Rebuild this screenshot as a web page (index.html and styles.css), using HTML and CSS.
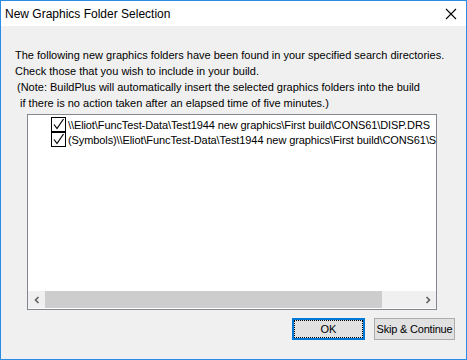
FILE: index.html
```html
<!DOCTYPE html>
<html lang="en">
<head>
  <meta charset="UTF-8">
  <title>New Graphics Folder Selection</title>
  <link rel="stylesheet" href="styles.css">
</head>
<body>
  <div class="window">
    <div class="titlebar">
      <span class="title">New Graphics Folder Selection</span>
      <svg class="close" width="12" height="12" viewBox="0 0 12 12">
        <path d="M1 1 L11 11 M11 1 L1 11" stroke="#000" stroke-width="1.1" fill="none"/>
      </svg>
    </div>

    <div class="content">
      <p class="message">The following new graphics folders have been found in your specified search directories.<br>Check those that you wish to include in your build.</p>
      <p class="note">(Note: BuildPlus will automatically insert the selected graphics folders into the build<br>&nbsp;if there is no action taken after an elapsed time of five minutes.)</p>

      <div class="listbox">
        <div class="rows">
          <div class="row">
            <span class="check"><svg width="13" height="13" viewBox="0 0 13 13"><path d="M2 6.5 L5 10.5 L11.5 1" stroke="#000" stroke-width="1.2" fill="none"/></svg></span>
            <span class="path">\\Eliot\FuncTest-Data\Test1944 new graphics\First build\CONS61\DISP.DRS</span>
          </div>
          <div class="row">
            <span class="check"><svg width="13" height="13" viewBox="0 0 13 13"><path d="M2 6.5 L5 10.5 L11.5 1" stroke="#000" stroke-width="1.2" fill="none"/></svg></span>
            <span class="path">(Symbols)\\Eliot\FuncTest-Data\Test1944 new graphics\First build\CONS61\S</span>
          </div>
        </div>

        <div class="hscroll">
          <span class="arrow"><svg width="8" height="8" viewBox="0 0 8 8"><path d="M5.5 1 L2.5 4 L5.5 7" stroke="#606060" stroke-width="1.6" fill="none"/></svg></span>
          <div class="track"><div class="thumb"></div></div>
          <span class="arrow"><svg width="8" height="8" viewBox="0 0 8 8"><path d="M2.5 1 L5.5 4 L2.5 7" stroke="#606060" stroke-width="1.6" fill="none"/></svg></span>
        </div>
      </div>

      <div class="buttons">
        <button class="btn default"><span class="focus">OK</span></button>
        <button class="btn skip">Skip &amp; Continue</button>
      </div>
    </div>
  </div>
</body>
</html>
```

FILE: styles.css
```css
body {
  margin: 0;
  background: #ffffff;
  font-family: "Liberation Sans", Arial, sans-serif;
  font-size: 11px;
  color: #000;
}

.window {
  width: 467px;
  height: 360px;
  box-sizing: border-box;
  border: 1px solid #2b8ce6;
  display: flex;
  flex-direction: column;
}

.titlebar {
  height: 25px;
  background: #fff;
  display: flex;
  align-items: center;
  justify-content: space-between;
  padding: 0 9px 0 4px;
  flex-shrink: 0;
}

.title {
  font-family: "Liberation Sans", Arial, sans-serif;
  font-size: 12px;
  color: #000;
}

.close {
  margin-top: 1px;
}

.content {
  flex: 1;
  background: #f0f0f0;
  padding: 21px 0 0 14px;
  display: flex;
  flex-direction: column;
}

.message,
.note {
  margin: 0;
  line-height: 16px;
  white-space: nowrap;
}

.note {
  padding-left: 2px;
}

.listbox {
  margin-top: 3px;
  margin-left: 12px;
  width: 410px;
  height: 196px;
  box-sizing: border-box;
  border: 1px solid #828790;
  background: #fff;
  display: flex;
  flex-direction: column;
  overflow: hidden;
}

.rows {
  flex: 1;
  padding: 2px 0 0 23px;
  overflow: hidden;
}

.row {
  display: flex;
  align-items: center;
  height: 15px;
  white-space: nowrap;
}

.check {
  width: 13px;
  height: 13px;
  border: 1px solid #000;
  background: #fff;
  flex-shrink: 0;
  margin-right: 2px;
  display: flex;
}

.path {
  color: #000;
  letter-spacing: -0.1px;
}

.hscroll {
  height: 17px;
  display: flex;
  background: #f0f0f0;
  margin-bottom: 1px;
}

.arrow {
  width: 17px;
  display: flex;
  align-items: center;
  justify-content: center;
}

.track {
  flex: 1;
  display: flex;
}

.thumb {
  width: 337px;
  background: #cdcdcd;
}

.buttons {
  display: flex;
  justify-content: flex-end;
  gap: 9px;
  margin-top: 8px;
  padding-right: 11px;
}

.btn {
  height: 22px;
  box-sizing: border-box;
  font-family: "Liberation Sans", Arial, sans-serif;
  font-size: 11px;
  color: #000;
  background: #e1e1e1;
  border: 1px solid #adadad;
  padding: 0;
  margin: 0;
  white-space: nowrap;
}

.btn.skip {
  width: 81px;
  letter-spacing: -0.2px;
}

.btn.default {
  width: 73px;
  border: 2px solid #0078d7;
}

.btn.default .focus {
  display: flex;
  align-items: center;
  justify-content: center;
  height: 100%;
  box-sizing: border-box;
  border: 1px dotted #000;
}
```
